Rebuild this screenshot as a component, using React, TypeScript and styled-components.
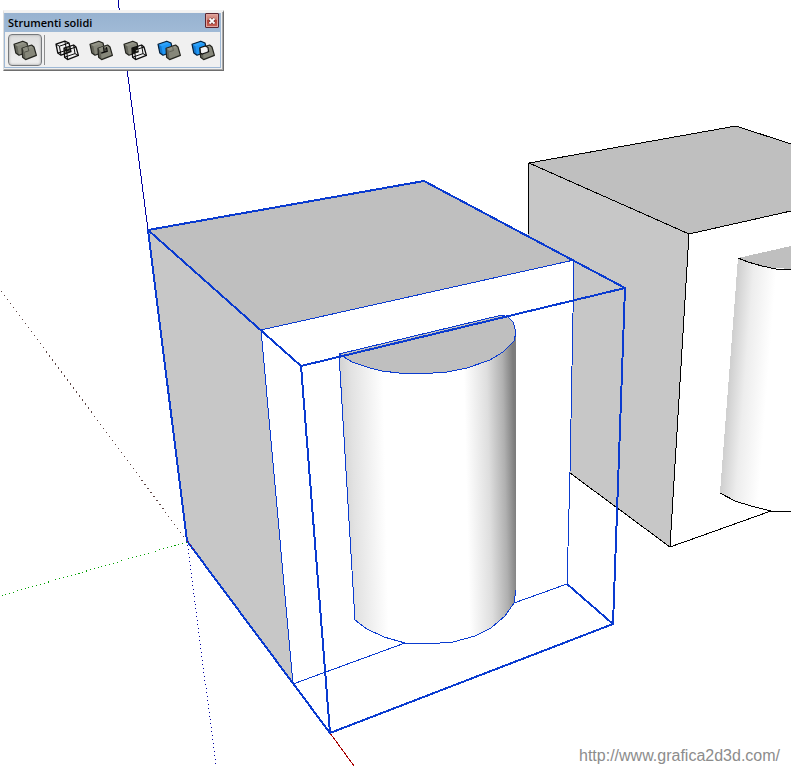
import React from "react";
import styled, { createGlobalStyle } from "styled-components";

const GlobalStyle = createGlobalStyle`
  *, *::before, *::after { box-sizing: border-box; }
  body { margin: 0; background: #fff; }
`;

const Workspace = styled.main`
  display: grid;
  min-height: 100vh;
  overflow: hidden;
`;

const Scene = styled.svg`
  grid-area: 1 / 1;
  display: block;
  width: 100%;
  height: auto;
`;

const Palette = styled.section`
  grid-area: 1 / 1;
  z-index: 1;
  align-self: start;
  justify-self: start;
  margin: 10px 0 0 3px;
  border: solid;
  border-width: 2px 1px 1px;
  border-color: #f2f2f2 #6e6e6e #6e6e6e #dedede;
  box-shadow: inset -1px -1px #a8a8a8;
  background: #f0f0f0;
  padding: 1px 2px 2px 0;
`;

const PaletteFrame = styled.div`
  border: solid #9fb9d6;
  border-width: 0 1px 1px;
`;

const TitleBar = styled.header`
  display: flex;
  align-items: center;
  justify-content: space-between;
  height: 19px;
  padding: 0 1px 0 3px;
  background: linear-gradient(#97b2d0, #a0bad6);
`;

const Title = styled.h1`
  margin: 0;
  font: 600 11px/16px "Open Sans", sans-serif;
  color: #000;
`;

const CloseButton = styled.button`
  display: grid;
  place-items: center;
  align-self: start;
  width: 14px;
  height: 15px;
  padding: 0;
  border: 1px solid #5c2630;
  border-radius: 1px;
  background: linear-gradient(#dfa49b, #cb776d 45%, #b34136 50%, #cb6558);
  box-shadow: inset 0 0 0 1px #e0a69f;
`;

const Tools = styled.div`
  display: flex;
  align-items: center;
  padding: 2px 0 1px 3px;
`;

const ToolButton = styled.button<{ $active?: boolean }>`
  display: grid;
  place-items: center;
  width: 34px;
  height: 32px;
  padding: 0;
  border: 1px solid ${(p) => (p.$active ? "#76797c" : "transparent")};
  border-radius: 4px;
  background: ${(p) => (p.$active ? "linear-gradient(#dedede, #efefef)" : "transparent")};
  box-shadow: ${(p) => (p.$active ? "inset 0 0 2px 1px #c4c4c4" : "none")};
`;

const Separator = styled.span`
  width: 1px;
  height: 30px;
  margin: 0 5px 0 2px;
  background: #8e8e8e;
`;

const SiteLink = styled.a`
  grid-area: 1 / 1;
  z-index: 1;
  align-self: end;
  justify-self: end;
  margin-right: 11px;
  font: 16px/20px "Liberation Sans", Arial, sans-serif;
  color: #8c8c8c;
  text-decoration: none;
`;

type Kind = "shell" | "intersect" | "union" | "subtract" | "trim" | "split";
type Paint = { face: string; top: string; side: string; line: string };

const STONE: Paint = { face: "#86877a", top: "#929386", side: "#64655a", line: "#24251f" };
const BLUE: Paint = { face: "#1f97f5", top: "#2ea3fa", side: "#1479d0", line: "#06203a" };

const BACK_OUTLINE = "M1 4.2 9.8 1.2 14 3 16 11.6 6 15.2 2.8 13Z";
const FRONT_OUTLINE = "M9 8.2 18.6 5 21 7 23.4 15.4 12.6 19.6 9.6 17.2Z";

function BackBox({ c }: { c: Paint }) {
  return (
    <g strokeLinejoin="round">
      <path d={BACK_OUTLINE} fill={c.face} />
      <path d="M1 4.2 9.8 1.2 14 3 4.4 6.2Z" fill={c.top} />
      <path d="M1 4.2l3.4 2L6 15.2 2.8 13Z" fill={c.side} />
      <path d={BACK_OUTLINE} fill="none" stroke={c.line} strokeWidth="1.2" />
    </g>
  );
}

function FrontBox() {
  return (
    <g strokeLinejoin="round">
      <path d={FRONT_OUTLINE} fill={STONE.face} />
      <path d="M9 8.2 18.6 5 21 7 11.6 10.2Z" fill={STONE.top} />
      <path d="M9 8.2l2.6 2 1 9.4-3-2.4Z" fill={STONE.side} />
      <path d={FRONT_OUTLINE} fill="none" stroke={STONE.line} strokeWidth="1.2" />
    </g>
  );
}

function BackWire() {
  return (
    <g fill="none" stroke="#0c0c0c" strokeLinejoin="round">
      <path d={BACK_OUTLINE} strokeWidth="1.3" />
      <path d="M1 4.2l3.4 2L14 3M4.4 6.2 6 15.2M9.8 1.2l1.8 9L2.8 13M11.6 10.2l4.4 1.4" />
    </g>
  );
}

function FrontWire() {
  return (
    <g fill="none" stroke="#0c0c0c" strokeLinejoin="round">
      <path d={FRONT_OUTLINE} strokeWidth="1.3" />
      <path d="M9 8.2l2.6 2L21 7M11.6 10.2l1 9.4M18.6 5l1.4 8.6-10.4 3.6M20 13.6l3.4 1.8" />
    </g>
  );
}

function SolidIcon({ kind }: { kind: Kind }) {
  return (
    <svg width="24" height="21" viewBox="0 0 24 21" aria-hidden="true">
      {kind === "shell" && (
        <>
          <BackBox c={STONE} />
          <FrontBox />
          <path d="M9.6 8.2 14.6 6.6l1 4.2-4 1.3Z" fill="#8c8d80" />
          <path d="M14 3l1.8 7.8-4 1.3" fill="none" stroke="#44453c" strokeWidth=".8" />
        </>
      )}
      {kind === "intersect" && (
        <>
          <path d="M9 8.2l5.6-1.8 1.4 5.2-6 2.2Z" fill="#74756a" />
          <BackWire />
          <FrontWire />
        </>
      )}
      {kind === "union" && (
        <>
          <BackBox c={STONE} />
          <FrontBox />
          <path d="M9.6 8.2 14.6 6.6l.6 4-3.6 1.2Z" fill="#8c8d80" />
          <path d="M14.6 7.2l.7 5.2M12.2 13.2l6-2-.8-4" fill="none" stroke="#0c0c0c" strokeWidth="1.3" />
          <path d="M15.4 8.2l1.4-.4.4 2.6-1.5.6Z" fill="#3b3c34" />
        </>
      )}
      {kind === "subtract" && (
        <>
          <BackBox c={STONE} />
          <path d="M9 8.2l5.6-1.8 1.4 5.2-6 2.2Z" fill="#15160f" />
          <path d="M10.4 14.2 16 12.4 15 7.6l5-1 2.6 8.6-9.6 3.6Z" fill="#f0f0f0" />
          <path d="M12.6 9.4l2-.6.5 2-2 .7Z" fill="#a0a096" />
          <FrontWire />
        </>
      )}
      {kind === "trim" && (
        <>
          <BackBox c={BLUE} />
          <FrontBox />
          <path d="M12 12l4.4-1.5-.8-4" fill="none" stroke="#5a5b51" strokeWidth=".8" />
        </>
      )}
      {kind === "split" && (
        <>
          <BackBox c={BLUE} />
          <FrontBox />
          <path
            d="M9 7.8l5.4-1.8 2.6 1.6.6 4-2 .9-4.6 1.6-1.6-1.2Z"
            fill="#f2f2f2"
            stroke="#101010"
            strokeWidth="1.2"
          />
        </>
      )}
    </svg>
  );
}

const TOOLS: { kind: Kind; label: string }[] = [
  { kind: "intersect", label: "Interseca" },
  { kind: "union", label: "Unisci" },
  { kind: "subtract", label: "Sottrai" },
  { kind: "trim", label: "Ritaglia" },
  { kind: "split", label: "Dividi" },
];

const RIM_FRONT = "M339 354 352 362 370 368 382 371 399 373H433L447 372 467 368 490 360 503 352 514 341 516 332";
const LID = `${RIM_FRONT} 513 322 508 317 502 315Z`;
const BASE = "516 590 514 603 505 616 491 628 475 636 453 642 428 644 405 643 384 637 367 629 355 620";

function Model() {
  return (
    <Scene viewBox="0 0 791 766" role="img" aria-label="Modello 3D" shapeRendering="crispEdges">
      <defs>
        <linearGradient id="drum" gradientUnits="userSpaceOnUse" x1="340" y1="500" x2="516" y2="496">
          <stop offset="0" stopColor="#cfcfcf" />
          <stop offset=".08" stopColor="#e2e2e2" />
          <stop offset=".26" stopColor="#fff" />
          <stop offset=".72" stopColor="#fff" />
          <stop offset=".85" stopColor="#dedede" />
          <stop offset=".94" stopColor="#b0b0b0" />
          <stop offset="1" stopColor="#7c7c7c" />
        </linearGradient>
        <linearGradient id="drumFar" gradientUnits="userSpaceOnUse" x1="730" y1="375" x2="768" y2="378">
          <stop offset="0" stopColor="#d0d0d0" />
          <stop offset=".4" stopColor="#ededed" />
          <stop offset="1" stopColor="#fff" />
        </linearGradient>
      </defs>

      <g fill="none" strokeWidth="1">
        <path d="M118 0 148 230" stroke="#0000a0" />
        <path d="M187 541 0 289" stroke="#5c4444" strokeDasharray="1 4" />
        <path d="M187 542 0 596" stroke="#00a000" strokeDasharray="1 3" />
        <path d="M187 541 216 766" stroke="#0000a0" strokeDasharray="1 3" />
        <path d="M330 733 354 766" stroke="#a80000" />
      </g>

      <path d="M529 163 736 126 791 144V211L689 234Z" fill="#bfbfbf" />
      <path d="M529 163 689 234 670 547 570 473 574 260 528 236Z" fill="#c7c7c7" />
      <path d="M738 258 791 246V269L762 267Z" fill="#bfbfbf" />
      <path d="M738 258 762 267 791 269V511L771 510 751 506 735 501 720 493Z" fill="url(#drumFar)" />
      <g fill="none" stroke="#000">
        <path d="M528 236 529 163 736 126 791 144M529 163 689 234 791 211M689 234 670 547 570 473M670 547 771 511" />
        <path d="M738 258 748 262 762 266 776 269 791 270M720 493 735 501 751 506 771 511H791" />
      </g>

      <path d="M148 230 424 181 574 260 261 330Z" fill="#bfbfbf" />
      <path d="M148 230 261 330 293 684 187 541Z" fill="#c7c7c7" />
      <path d={`${RIM_FRONT} ${BASE}Z`} fill="url(#drum)" />
      <path d={LID} fill="#bfbfbf" />
      <g fill="none" stroke="#0a3bd0">
        <path d={LID} />
        <path d={`M339 354 355 620M${BASE}`} />
        <path d="M261 330 574 260 570 472 567 584 514 603M261 330 293 684 405 643" />
      </g>
      <g fill="none" stroke="#0a3bd0" strokeWidth="2" strokeLinejoin="round">
        <path d="M148 230 424 181 625 288 301 366ZM148 230 187 541 330 733 301 366M330 733 613 624 625 288M613 624 567 584" />
      </g>
      <path d="M187 541 196 553" stroke="#b00020" strokeDasharray="1 4" />
    </Scene>
  );
}

export default function App() {
  return (
    <Workspace>
      <GlobalStyle />
      <Model />
      <Palette aria-label="Strumenti solidi">
        <PaletteFrame>
          <TitleBar>
            <Title>Strumenti solidi</Title>
            <CloseButton type="button" aria-label="Chiudi">
              <svg width="8" height="8" viewBox="0 0 8 8" aria-hidden="true">
                <path d="M1.5 1.5l5 5m0-5l-5 5" stroke="#5b2a2a" strokeWidth="3" />
                <path d="M1.5 1.5l5 5m0-5l-5 5" stroke="#fff" strokeWidth="1.8" />
              </svg>
            </CloseButton>
          </TitleBar>
          <Tools role="toolbar" aria-label="Strumenti solidi">
            <ToolButton type="button" $active aria-pressed="true" aria-label="Guscio esterno">
              <SolidIcon kind="shell" />
            </ToolButton>
            <Separator />
            {TOOLS.map((t) => (
              <ToolButton key={t.kind} type="button" aria-label={t.label}>
                <SolidIcon kind={t.kind} />
              </ToolButton>
            ))}
          </Tools>
        </PaletteFrame>
      </Palette>
      <SiteLink href="http://www.grafica2d3d.com/">http://www.grafica2d3d.com/</SiteLink>
    </Workspace>
  );
}
